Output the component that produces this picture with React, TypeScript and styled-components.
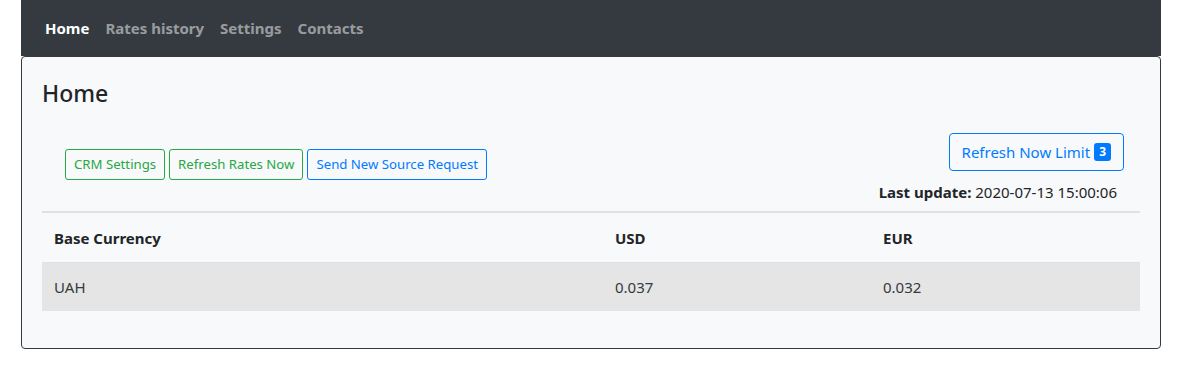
import React from "react";
import styled, { createGlobalStyle } from "styled-components";

const Global = createGlobalStyle`
  html, body { margin: 0; padding: 0; background: #fff; }
  body {
    font-family: "Segoe UI", "Noto Sans", "Open Sans", Arial, sans-serif;
    font-size: 15px;
    line-height: 24px;
    color: #212529;
  }
  * { box-sizing: border-box; }
`;

const Page = styled.div`
  padding: 0 25px 0 21px;
`;

const Container = styled.div`
  width: 1140px;
`;

const Navbar = styled.nav`
  height: 56px;
  background: #343a40;
  display: flex;
  align-items: center;
  padding: 0 16px;
`;

const NavLink = styled.a<{ $active?: boolean }>`
  padding: 8px;
  font-weight: 700;
  font-size: 15px;
  line-height: 24px;
  text-decoration: none;
  color: ${(p) => (p.$active ? "#ffffff" : "rgba(255,255,255,0.5)")};
`;

const Card = styled.div`
  background: #f8f9fa;
  border: 1px solid #343a40;
  border-radius: 4px;
`;

const CardBody = styled.div`
  padding: 20px 20px 37px;
`;

const Title = styled.h4`
  margin: 2px 0 0;
  font-size: 23px;
  font-weight: 500;
  line-height: 29px;
`;

const Toolbar = styled.div`
  display: flex;
  justify-content: space-between;
  margin-top: 25px;
`;

const LeftGroup = styled.div`
  display: flex;
  gap: 4px;
  padding-top: 16px;
  padding-left: 23px;
  align-items: flex-start;
`;

const RightGroup = styled.div`
  display: flex;
  flex-direction: column;
  align-items: flex-end;
  padding-right: 16px;
`;

const SmallButton = styled.button<{ $tone: "success" | "primary" }>`
  font-family: inherit;
  font-size: 13.2px;
  line-height: 21px;
  padding: 4px 8px;
  border-radius: 3px;
  background: transparent;
  color: ${(p) => (p.$tone === "success" ? "#28a745" : "#007bff")};
  border: 1px solid ${(p) => (p.$tone === "success" ? "#28a745" : "#007bff")};
  cursor: pointer;
`;

const LimitButton = styled.button`
  font-family: inherit;
  font-size: 15px;
  line-height: 24px;
  padding: 6px 12px;
  border-radius: 4px;
  background: transparent;
  color: #007bff;
  border: 1px solid #007bff;
  display: inline-flex;
  align-items: center;
  gap: 4px;
  cursor: pointer;
`;

const Badge = styled.span`
  background: #007bff;
  color: #fff;
  font-size: 12px;
  font-weight: 700;
  line-height: 1;
  padding: 3px 5px;
  border-radius: 3px;
`;

const LastUpdate = styled.div`
  margin-top: 9px;
  margin-right: 7px;
  font-size: 15px;
  line-height: 24px;
`;

const Strong = styled.b`
  font-weight: 700;
`;

const Table = styled.table`
  width: 100%;
  margin-top: 7px;
  border-collapse: collapse;
`;

const Th = styled.th<{ $w?: string }>`
  text-align: left;
  padding: 13px 12px 12px;
  font-weight: 700;
  line-height: 24px;
  border-top: 2px solid #dee2e6;
  width: ${(p) => p.$w || "auto"};
`;

const Tr = styled.tr`
  background: #e5e5e5;
`;

const Td = styled.td`
  padding: 12px;
  line-height: 24px;
  border-top: 1px solid #dee2e6;
  color: #343a40;
`;

export default function App() {
  return (
    <>
      <Global />
      <Page>
        <Container>
          <Navbar>
            <NavLink $active>Home</NavLink>
            <NavLink>Rates history</NavLink>
            <NavLink>Settings</NavLink>
            <NavLink>Contacts</NavLink>
          </Navbar>
          <Card>
            <CardBody>
              <Title>Home</Title>
              <Toolbar>
                <LeftGroup>
                  <SmallButton $tone="success">CRM Settings</SmallButton>
                  <SmallButton $tone="success">Refresh Rates Now</SmallButton>
                  <SmallButton $tone="primary">Send New Source Request</SmallButton>
                </LeftGroup>
                <RightGroup>
                  <LimitButton>
                    Refresh Now Limit <Badge>3</Badge>
                  </LimitButton>
                  <LastUpdate>
                    <Strong>Last update:</Strong> 2020-07-13 15:00:06
                  </LastUpdate>
                </RightGroup>
              </Toolbar>
              <Table>
                <thead>
                  <tr>
                    <Th $w="561px">Base Currency</Th>
                    <Th $w="268px">USD</Th>
                    <Th>EUR</Th>
                  </tr>
                </thead>
                <tbody>
                  <Tr>
                    <Td>UAH</Td>
                    <Td>0.037</Td>
                    <Td>0.032</Td>
                  </Tr>
                </tbody>
              </Table>
            </CardBody>
          </Card>
        </Container>
      </Page>
    </>
  );
}
